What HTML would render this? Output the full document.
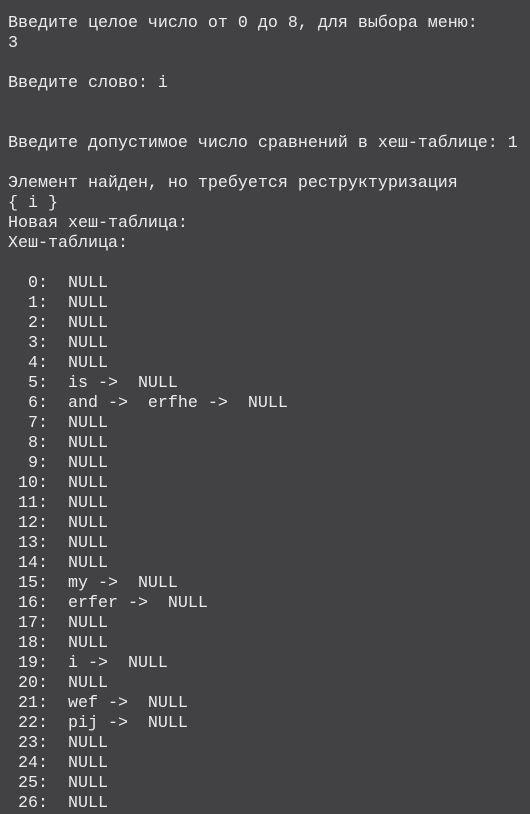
<!DOCTYPE html>
<html><head><meta charset="utf-8"><style>
html,body{margin:0;padding:0;background:#424144;width:530px;height:814px;overflow:hidden}
pre{margin:0;padding:14px 0 0 8px;font-family:"Liberation Mono","Courier New",monospace;font-size:16.67px;line-height:20px;color:#ececec}
</style></head><body><pre>Введите целое число от 0 до 8, для выбора меню:
3

Введите слово: i


Введите допустимое число сравнений в хеш-таблице: 1

Элемент найден, но требуется реструктуризация
{ i }
Новая хеш-таблица:
Хеш-таблица:

  0:  NULL
  1:  NULL
  2:  NULL
  3:  NULL
  4:  NULL
  5:  is -&gt;  NULL
  6:  and -&gt;  erfhe -&gt;  NULL
  7:  NULL
  8:  NULL
  9:  NULL
 10:  NULL
 11:  NULL
 12:  NULL
 13:  NULL
 14:  NULL
 15:  my -&gt;  NULL
 16:  erfer -&gt;  NULL
 17:  NULL
 18:  NULL
 19:  i -&gt;  NULL
 20:  NULL
 21:  wef -&gt;  NULL
 22:  pij -&gt;  NULL
 23:  NULL
 24:  NULL
 25:  NULL
 26:  NULL</pre></body></html>
